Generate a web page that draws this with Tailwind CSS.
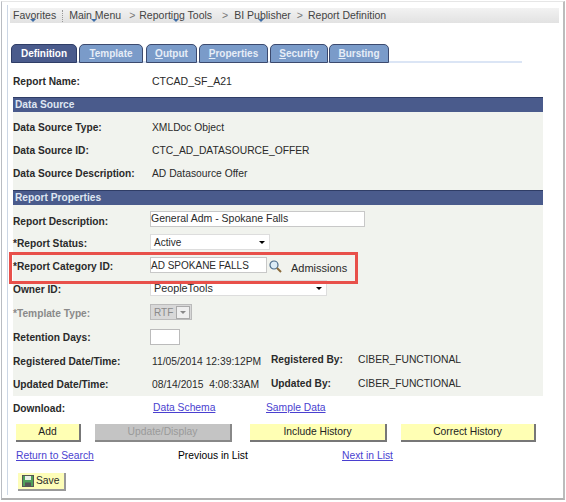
<!DOCTYPE html>
<html lang="en">
<head>
    <meta charset="UTF-8">
    <title>Report Definition</title>
    <script src="https://cdn.jsdelivr.net/npm/@tailwindcss/browser@4"></script>
</head>
<body class="bg-white font-['Liberation_Sans',Arial,sans-serif] text-[10.3px] text-[#2a2a2a] overflow-hidden">
    <div class="relative w-[564px] h-[499px] mt-[1px] ml-[1px] bg-white border-t border-t-[#e6e6e6] border-l border-l-[#b9bcc2] border-r-2 border-r-[#bcbcbc] border-b-2 border-b-[#b0b0b0]">
        <div class="ml-[5px] mt-[3px] pt-[3px] h-[490px] border-l border-[#ccd6e4] pl-[2px]">
            <!-- breadcrumb -->
            <div class="h-[15px] w-[549px] bg-gradient-to-b from-[#f2f2f2] to-[#e2e2e2] flex items-center pl-[3px] text-[10.5px] text-[#444] whitespace-nowrap">
                <span class="relative">Favorites<span class="absolute left-[17px] top-[11px] border-x-[3px] border-t-[3px] border-x-transparent border-t-[#3f6ea8]"></span></span>
                <span class="ml-[6px] mr-[6px] h-[12px] border-l border-dotted border-[#999]"></span>
                <span class="relative">Main Menu<span class="absolute left-[22px] top-[11px] border-x-[3px] border-t-[3px] border-x-transparent border-t-[#3f6ea8]"></span></span>
                <span class="ml-[8px] mr-[4px] text-[#777]">&gt;</span>
                <span class="relative">Reporting Tools<span class="absolute left-[34px] top-[11px] border-x-[3px] border-t-[3px] border-x-transparent border-t-[#3f6ea8]"></span></span>
                <span class="ml-[10px] mr-[6px] text-[#777]">&gt;</span>
                <span class="relative">BI Publisher<span class="absolute left-[24px] top-[11px] border-x-[3px] border-t-[3px] border-x-transparent border-t-[#3f6ea8]"></span></span>
                <span class="ml-[6px] mr-[5px] text-[#777]">&gt;</span>
                <span>Report Definition</span>
            </div>

            <!-- tabs -->
            <div class="mt-[21px] ml-[1px] w-[511px] h-[19px] flex items-end border-b-2 border-[#dbe5f5] font-bold text-[10px] text-[#e6edf7]">
                <div class="w-[66px] h-[19px] shrink-0 -mb-[2px] bg-[#4a5b8c] border border-[#2f3d66] rounded-t-[5px] flex items-center justify-center text-white">Definition</div>
                <div class="w-[64px] h-[19px] shrink-0 ml-[2px] -mb-[2px] bg-[#7a9bc9] border border-[#3c4a6e] rounded-t-[5px] flex items-center justify-center"><span><u>T</u>emplate</span></div>
                <div class="w-[51px] h-[19px] shrink-0 ml-[3px] -mb-[2px] bg-[#7a9bc9] border border-[#3c4a6e] rounded-t-[5px] flex items-center justify-center"><span><u>O</u>utput</span></div>
                <div class="w-[69px] h-[19px] shrink-0 ml-[2px] -mb-[2px] bg-[#7a9bc9] border border-[#3c4a6e] rounded-t-[5px] flex items-center justify-center"><span><u>P</u>roperties</span></div>
                <div class="w-[58px] h-[19px] shrink-0 ml-[2px] -mb-[2px] bg-[#7a9bc9] border border-[#3c4a6e] rounded-t-[5px] flex items-center justify-center"><span><u>S</u>ecurity</span></div>
                <div class="w-[60px] h-[19px] shrink-0 ml-[1px] -mb-[2px] bg-[#7a9bc9] border border-[#3c4a6e] rounded-t-[5px] flex items-center justify-center"><span><u>B</u>ursting</span></div>
            </div>

            <div class="ml-[3px] w-[530px]">
                <div class="h-[34px] pt-[3px] flex items-center font-bold text-[10.2px]"><span class="w-[139px]">Report Name:</span><span class="font-normal text-[10.5px]">CTCAD_SF_A21</span></div>

                <div class="h-[15px] bg-[#4a5b8c] border-t border-[#2f3d66] pl-[2px] flex items-center font-bold text-[10.2px] text-[#dfe6f2]">Data Source</div>
                <div class="bg-[#f1f3ee] pb-[5px] pt-[4px]">
                    <div class="h-[23px] flex items-center"><span class="w-[139px] font-bold text-[10.2px]">Data Source Type:</span><span>XMLDoc Object</span></div>
                    <div class="h-[23px] pt-[1px] flex items-center"><span class="w-[139px] font-bold text-[10.2px]">Data Source ID:</span><span>CTC_AD_DATASOURCE_OFFER</span></div>
                    <div class="h-[23px] flex items-center"><span class="w-[139px] font-bold text-[10.2px]">Data Source Description:</span><span>AD Datasource Offer</span></div>
                </div>

                <div class="h-[15px] bg-[#4a5b8c] border-t border-[#2f3d66] pl-[2px] flex items-center font-bold text-[10.2px] text-[#dfe6f2]">Report Properties</div>
                <div class="bg-[#f1f3ee] h-[191px] pt-[5px]">
                    <div class="h-[23px] flex items-center"><span class="w-[137px] font-bold text-[10.2px]">Report Description:</span><span class="w-[215px] h-[16px] bg-white border border-[#c8c8c8] flex items-center -mt-[5px] text-[10.5px]">General Adm - Spokane Falls</span></div>
                    <div class="h-[22px] flex items-center"><span class="w-[137px] font-bold text-[10.2px]">*Report Status:</span><span class="w-[120px] h-[16px] bg-white border border-[#ddd] flex items-center justify-between pl-[3px] pr-[4px] -mt-[4px] text-[10px]">Active<i class="border-x-[3px] border-t-[3px] border-x-transparent border-t-black"></i></span></div>
                    <div class="h-[23px] flex items-center"><span class="w-[137px] font-bold text-[10.2px]">*Report Category ID:</span><span class="w-[117px] h-[16px] bg-white border border-[#c8c8c8] flex items-center -mt-[3px] text-[10px]">AD SPOKANE FALLS</span>
                        <svg class="ml-[1px] -mt-[2px]" width="14" height="14" viewBox="0 0 14 14"><circle cx="6" cy="6" r="4" fill="#dcecf7" stroke="#4a6a8a" stroke-width="1.2"/><path d="M9 9l4 4" stroke="#8a6a3a" stroke-width="2"/></svg>
                        <span class="ml-[9px] mt-[3px] text-[11px]">Admissions</span>
                    </div>
                    <div class="h-[24px] flex items-center"><span class="w-[137px] font-bold text-[10.2px]">Owner ID:</span><span class="w-[177px] h-[16px] bg-white border border-[#ddd] flex items-center justify-between pl-[3px] pr-[4px] -mt-[4px] text-[10.8px]">PeopleTools<i class="border-x-[3px] border-t-[3px] border-x-transparent border-t-black"></i></span></div>
                    <div class="h-[24px] flex items-center text-[#8a8a8a]"><span class="w-[137px] font-bold text-[10.2px]">*Template Type:</span><span class="w-[42px] h-[16px] bg-[#d8d8d8] border border-[#bbb] flex items-center -mt-[4px] pl-[3px] pr-[1px] justify-between text-[10px]">RTF<i class="w-[14px] h-[13px] bg-[#eee] border border-[#aaa] flex items-center justify-center"><b class="border-x-[3px] border-t-[3px] border-x-transparent border-t-[#888]"></b></i></span></div>
                    <div class="h-[24px] flex items-center"><span class="w-[137px] font-bold text-[10.2px]">Retention Days:</span><span class="w-[30px] h-[16px] bg-white border border-[#bbb] -mt-[3px]"></span></div>
                    <div class="h-[23px] flex items-center"><span class="w-[139px] font-bold text-[10.2px]">Registered Date/Time:</span><span class="w-[119px]">11/05/2014 12:39:12PM</span><span class="w-[87px] font-bold text-[10.2px] -mt-[3px]">Registered By:</span><span class="-mt-[3px]">CIBER_FUNCTIONAL</span></div>
                    <div class="h-[23px] pt-[1px] flex items-center"><span class="w-[139px] font-bold text-[10.2px]">Updated Date/Time:</span><span class="w-[119px]">08/14/2015 &nbsp;4:08:33AM</span><span class="w-[87px] font-bold text-[10.2px] -mt-[3px]">Updated By:</span><span class="-mt-[3px]">CIBER_FUNCTIONAL</span></div>
                </div>

                <div class="h-[25px] pt-[1px] flex items-center"><span class="w-[140px] font-bold text-[10.2px]">Download:</span><a class="underline text-[#4a3fd0] w-[113px] -mt-[2px]">Data Schema</a><a class="underline text-[#4a3fd0] -mt-[2px]">Sample Data</a></div>

                <div class="mt-[3px] h-[18px] flex ml-[3px] text-[#222]">
                    <div class="w-[65px] bg-[#ffffb4] border-r-2 border-b-2 border-[#777] flex items-center justify-center">Add</div>
                    <div class="w-[137px] ml-[14px] bg-[#c4c4c4] border-r-2 border-b-2 border-[#888] flex items-center justify-center text-[#9a9a9a]">Update/Display</div>
                    <div class="w-[137px] ml-[18px] bg-[#ffffb4] border-r-2 border-b-2 border-[#777] flex items-center justify-center">Include History</div>
                    <div class="w-[135px] ml-[14px] bg-[#ffffb4] border-r-2 border-b-2 border-[#777] flex items-center justify-center">Correct History</div>
                </div>

                <div class="mt-[6px] h-[16px] flex items-center ml-[3px]"><a class="underline text-[#4a3fd0] w-[162px]">Return to Search</a><span class="w-[164px] text-black">Previous in List</span><a class="underline text-[#4a3fd0]">Next in List</a></div>

                <div class="mt-[9px] ml-[5px] w-[48px] h-[18px] bg-[#fdfdb8] border-r-2 border-b-2 border-[#999] flex items-center pl-[4px] gap-[2px]">
                    <svg width="12" height="12" viewBox="0 0 12 12"><rect x=".5" y=".5" width="11" height="11" fill="#4fa05a" stroke="#555"/><rect x="3" y="1" width="6" height="4" fill="#e8efe8"/><rect x="3" y="7.5" width="6" height="4" fill="#555"/></svg>
                    <span>Save</span>
                </div>
            </div>
        </div>

        <!-- red callout drawn over the category row -->
        <div class="absolute left-[7px] top-[250px] w-[349px] h-[32px] border-[3px] border-[#e8504a]"></div>
    </div>
</body>
</html>
